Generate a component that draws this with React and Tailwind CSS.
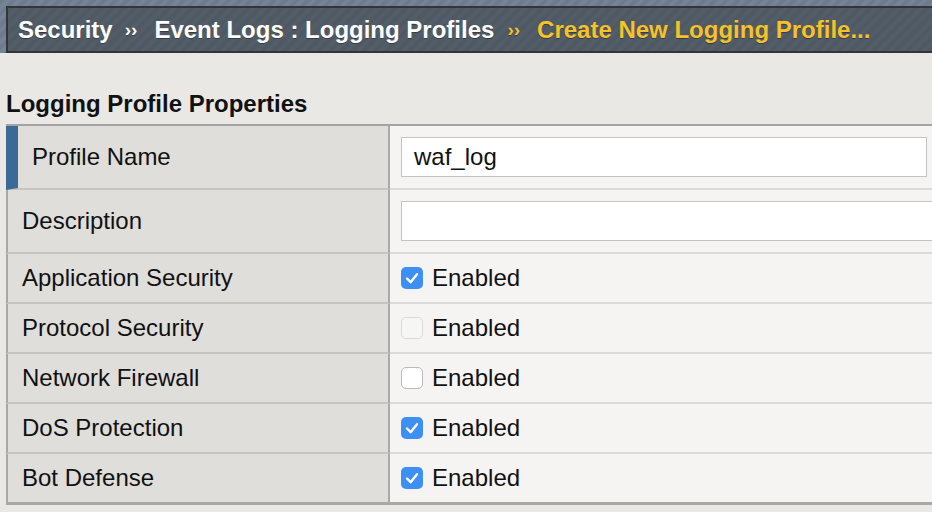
import React from 'react';

const rows = [
  { label: 'Profile Name', type: 'input', value: 'waf_log', accent: true },
  { label: 'Description', type: 'input', value: '', wide: true },
  { label: 'Application Security', type: 'check', checked: true },
  { label: 'Protocol Security', type: 'check', checked: false, muted: true },
  { label: 'Network Firewall', type: 'check', checked: false },
  { label: 'DoS Protection', type: 'check', checked: true },
  { label: 'Bot Defense', type: 'check', checked: true },
];

const Checkbox = ({ checked, muted }) => {
  if (checked) {
    return (
      <span className="w-[22px] h-[22px] rounded-[5px] bg-[#3d8ff4] flex items-center justify-center flex-shrink-0">
        <svg width="22" height="22" viewBox="0 0 22 22" fill="none">
          <path d="M6 11.5 L9.6 15.2 L16 7.2" stroke="white" strokeWidth="2.4" strokeLinecap="round" strokeLinejoin="round" />
        </svg>
      </span>
    );
  }
  return (
    <span
      className={
        muted
          ? "w-[22px] h-[22px] rounded-[5px] bg-[#f6f6f5] border border-[#d9d9d7] flex-shrink-0"
          : "w-[22px] h-[22px] rounded-[5px] bg-white border border-[#b9b9b9] flex-shrink-0"
      }
    />
  );
};

const Sep = ({ yellow }) => (
  <span className={yellow ? "ml-[13px] mr-[17px] text-[19px] text-[#f6c22b]" : "ml-[12px] mr-[17px] text-[19px]"}>››</span>
);

export default function App() {
  return (
    <div className="w-[932px] h-[512px] overflow-hidden bg-[#e9e8e4] font-['Liberation_Sans',Arial,sans-serif] text-[#111]">
      {/* breadcrumb bar */}
      <div className="pt-[6px] pl-[6px] bg-[#707f8f] bg-[repeating-linear-gradient(135deg,#6d7c8c_0px,#6d7c8c_4px,#748494_4px,#748494_8px)]">
        <div className="h-[47px] border-2 border-r-0 border-[#333536] bg-[repeating-linear-gradient(135deg,#4f5963_0px,#4f5963_4px,#535d67_4px,#535d67_8px)] flex items-center pl-[10px] text-[24px] leading-[28px] font-bold text-white whitespace-nowrap [text-shadow:0_1px_0_rgba(0,0,0,0.35)]">
          <span>Security</span>
          <Sep />
          <span>Event Logs : Logging Profiles</span>
          <Sep yellow />
          <span className="text-[#f6c22b]">Create New Logging Profile...</span>
        </div>
      </div>

      <div className="pt-[37px] pb-[6px] pl-[6px] text-[24px] leading-[28px] font-bold whitespace-nowrap">
        Logging Profile Properties
      </div>

      <div className="ml-[6px] w-[926px] border-t-2 border-[#a3a3a3]">
        {rows.map((row, i) => {
          const last = i === rows.length - 1;
          const tall = row.type === 'input';
          return (
            <div key={row.label} className={tall ? "flex h-[64px]" : last ? "flex h-[51px] border-b-[3px] border-[#a8a8a8]" : "flex h-[50px]"}>
              <div
                className={
                  (row.accent ? "border-l-[12px] border-l-[#3b6a97] " : "border-l-2 border-l-[#a8a8a8] ") +
                  (last ? "" : "border-b-2 border-b-[#c6c5c2] ") +
                  "w-[384px] flex-shrink-0 bg-[#dfdedb] border-r-2 border-r-[#a8a8a8] flex items-center pl-[14px] text-[24px] leading-[28px] whitespace-nowrap"
                }
              >
                {row.label}
              </div>
              <div className={(last ? "" : "border-b-2 border-b-[#dcdbd8] ") + "flex-1 bg-[#f5f4f2] flex items-center pl-[11px] overflow-hidden"}>
                {tall ? (
                  <div
                    className={
                      (row.wide ? "w-[560px] " : "w-[526px] ") +
                      "h-[40px] flex-shrink-0 bg-white border border-[#c4c4c4] flex items-center pl-[12px] text-[24px] leading-[28px]"
                    }
                  >
                    {row.value}
                  </div>
                ) : (
                  <div className="flex items-center gap-[9px] text-[24px] leading-[28px]">
                    <Checkbox checked={row.checked} muted={row.muted} />
                    <span>Enabled</span>
                  </div>
                )}
              </div>
            </div>
          );
        })}
      </div>
    </div>
  );
}
